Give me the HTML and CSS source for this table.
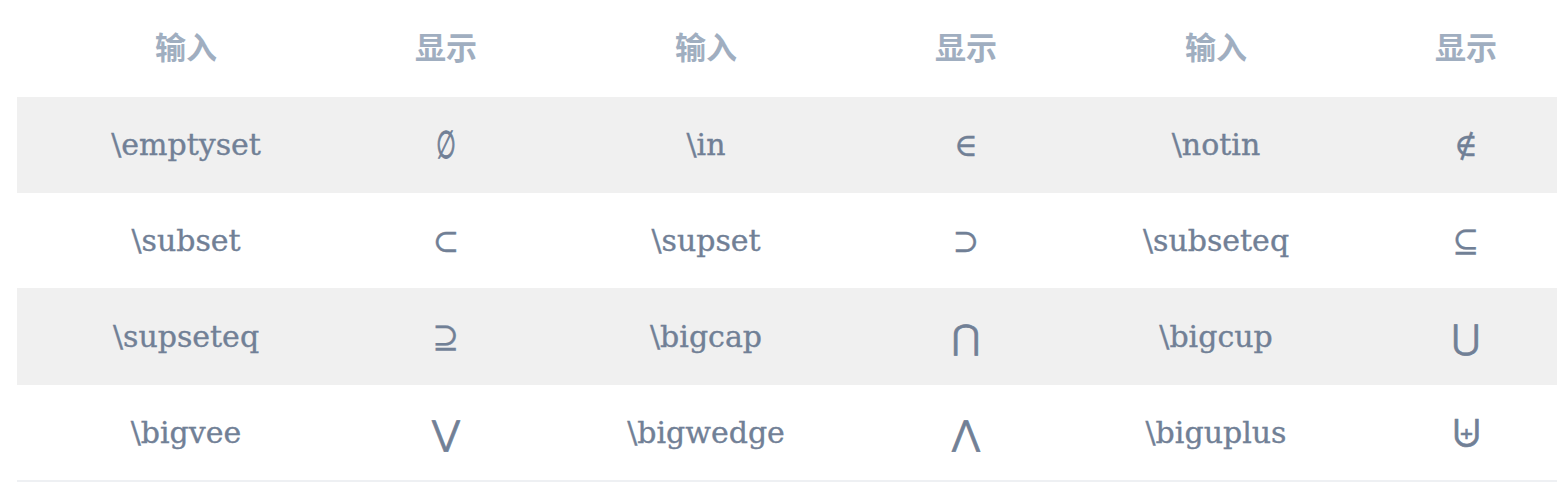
FILE: index.html
```html
<!DOCTYPE html>
<html lang="zh">
<head>
<meta charset="utf-8">
<link rel="stylesheet" href="styles.css">
</head>
<body>
<div class="wrap">
<table class="sym-table">
  <colgroup>
    <col class="c-in"><col class="c-out"><col class="c-in"><col class="c-out"><col class="c-in2"><col class="c-out">
  </colgroup>
  <thead>
    <tr><th>输入</th><th>显示</th><th>输入</th><th>显示</th><th>输入</th><th>显示</th></tr>
  </thead>
  <tbody>
    <tr class="odd">
      <td class="cmd">\emptyset</td><td class="sym"><span class="empty">∅</span></td>
      <td class="cmd">\in</td><td class="sym">∈</td>
      <td class="cmd">\notin</td><td class="sym">∉</td>
    </tr>
    <tr>
      <td class="cmd">\subset</td><td class="sym">⊂</td>
      <td class="cmd">\supset</td><td class="sym">⊃</td>
      <td class="cmd">\subseteq</td><td class="sym">⊆</td>
    </tr>
    <tr class="odd">
      <td class="cmd">\supseteq</td><td class="sym">⊇</td>
      <td class="cmd">\bigcap</td><td class="sym big">⋂</td>
      <td class="cmd">\bigcup</td><td class="sym big">⋃</td>
    </tr>
    <tr class="last">
      <td class="cmd">\bigvee</td><td class="sym big">⋁</td>
      <td class="cmd">\bigwedge</td><td class="sym big">⋀</td>
      <td class="cmd">\biguplus</td><td class="sym big">⨄</td>
    </tr>
  </tbody>
</table>
</div>
</body>
</html>
```
FILE: styles.css
```css
html, body {
  margin: 0;
  padding: 0;
  background: #ffffff;
}
.wrap {
  padding: 0 11px 0 17px;
}
.sym-table {
  width: 100%;
  border-collapse: collapse;
  table-layout: fixed;
}
.c-in { width: 338px; }
.c-in2 { width: 318px; }
.c-out { width: 182px; }
.sym-table th {
  height: 97px;
  padding: 0 0 6px 0;
  box-sizing: border-box;
  font-family: "Noto Sans CJK SC", "Noto Sans", sans-serif;
  font-weight: 700;
  font-size: 31px;
  color: #a0aec0;
  text-align: center;
  vertical-align: middle;
}
.sym-table td {
  height: 95px;
  padding: 0;
  text-align: center;
  vertical-align: middle;
  color: #718096;
  border-bottom: 1px solid #f0f0f0;
}
.sym-table tr.odd td {
  background: #f0f0f0;
}
.sym-table tr.last td {
  border-bottom: 2px solid #eef0f3;
}
.cmd {
  font-family: "DejaVu Serif", "Liberation Serif", serif;
  font-size: 30px;
  -webkit-text-stroke: 0.35px #718096;
}
.sym {
  font-family: "DejaVu Serif", "DejaVu Sans", serif;
  font-size: 32px;
  -webkit-text-stroke: 0.3px #718096;
}
.sym.big {
  font-size: 34px;
  -webkit-text-stroke: 0.7px #718096;
}
.empty {
  display: inline-block;
  transform: scale(0.7, 1.2);
  -webkit-text-stroke: 0.9px #718096;
}
```
